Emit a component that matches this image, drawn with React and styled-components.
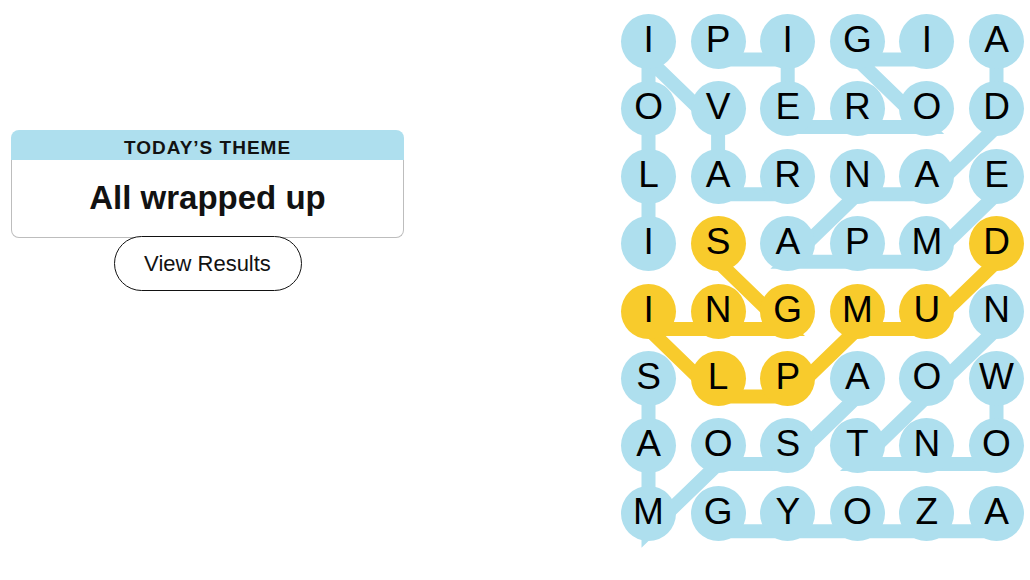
import React from "react";
import styled, { createGlobalStyle } from "styled-components";

const CELL = 55;
const COL_GAP = 14.6;
const ROW_GAP = 12.4;
const LINE_DROP = 18;
const BLUE = "#aedfee";
const YELLOW = "#f8cb2c";

const LETTERS = ["IPIGIA", "OVEROD", "LARNAE", "ISAPMD", "INGMUN", "SLPAOW", "AOSTNO", "MGYOZA"];

const WORDS = [
  { name: "RAVIOLI", cells: [[2, 2], [1, 2], [1, 1], [0, 0], [0, 1], [0, 2], [0, 3]] },
  { name: "PIEROGI", cells: [[1, 0], [2, 0], [2, 1], [3, 1], [4, 1], [3, 0], [4, 0]] },
  { name: "EMPANADA", cells: [[5, 2], [4, 3], [3, 3], [2, 3], [3, 2], [4, 2], [5, 1], [5, 0]] },
  { name: "SAMOSA", cells: [[0, 5], [0, 6], [0, 7], [1, 6], [2, 6], [3, 5]] },
  { name: "WONTON", cells: [[5, 5], [5, 6], [4, 6], [3, 6], [4, 5], [5, 4]] },
  { name: "GYOZA", cells: [[1, 7], [2, 7], [3, 7], [4, 7], [5, 7]] },
  {
    name: "DUMPLINGS",
    spangram: true,
    cells: [[5, 3], [4, 4], [3, 4], [2, 5], [1, 5], [0, 4], [1, 4], [2, 4], [1, 3]],
  },
];

const spangramCells = new Set(
  WORDS.filter((w) => w.spangram).flatMap((w) => w.cells.map(([c, r]) => `${c}-${r}`))
);

const centerX = (c) => CELL / 2 + c * (CELL + COL_GAP);
const centerY = (r) => CELL / 2 + r * (CELL + ROW_GAP) + LINE_DROP;

const GlobalStyle = createGlobalStyle`
  html, body {
    margin: 0;
    padding: 0;
    background: #ffffff;
  }
  body {
    font-family: "Liberation Sans", Arial, sans-serif;
    color: #121212;
  }
`;

const Page = styled.main`
  box-sizing: border-box;
  width: 1030px;
  height: 580px;
  display: flex;
  align-items: flex-start;
  padding: 14px 6px 0 11px;
  overflow: hidden;
`;

const ThemePanel = styled.section`
  width: 393px;
  margin-top: 116px;
  display: flex;
  flex-direction: column;
  align-items: center;
`;

const ThemeCard = styled.div`
  width: 100%;
  display: flex;
  flex-direction: column;
`;

const ThemeHeader = styled.div`
  box-sizing: border-box;
  height: 30px;
  padding-top: 5px;
  line-height: 25px;
  background: ${BLUE};
  border-radius: 8px 8px 0 0;
  text-align: center;
  font-size: 19px;
  font-weight: 700;
  letter-spacing: 1px;
  text-transform: uppercase;
  color: #121212;
`;

const ThemeBody = styled.div`
  box-sizing: border-box;
  height: 78px;
  border: 1px solid #bdbdbd;
  border-top: none;
  border-radius: 0 0 8px 8px;
  text-align: center;
`;

const ThemeTitle = styled.h1`
  margin: 0;
  font-size: 33px;
  line-height: 75px;
  font-weight: 700;
  color: #121212;
`;

const ResultsButton = styled.button`
  box-sizing: border-box;
  width: 188px;
  height: 55px;
  margin-top: -2px;
  border: 1px solid #121212;
  border-radius: 28px;
  background: #ffffff;
  font-family: "Liberation Sans", Arial, sans-serif;
  font-size: 22px;
  color: #121212;
  cursor: pointer;
`;

const Board = styled.div`
  position: relative;
  margin-left: auto;
  display: grid;
  grid-template-columns: repeat(6, ${CELL}px);
  grid-auto-rows: ${CELL}px;
  column-gap: ${COL_GAP}px;
  row-gap: ${ROW_GAP}px;
`;

const Trails = styled.svg`
  position: absolute;
  left: 0;
  top: 0;
  width: 100%;
  height: 100%;
  overflow: visible;
  z-index: 0;
  pointer-events: none;
`;

const Letter = styled.div`
  position: relative;
  z-index: 1;
  box-sizing: border-box;
  width: ${CELL}px;
  height: ${CELL}px;
  border-radius: 50%;
  background: ${(p) => (p.$spangram ? YELLOW : BLUE)};
  text-align: center;
  line-height: 51px;
  font-size: 37px;
  font-weight: 400;
  color: #000000;
  user-select: none;
`;

function WordTrails() {
  return (
    <Trails aria-hidden="true">
      {WORDS.map((w) => (
        <polyline
          key={w.name}
          points={w.cells.map(([c, r]) => `${centerX(c)},${centerY(r)}`).join(" ")}
          fill="none"
          stroke={w.spangram ? YELLOW : BLUE}
          strokeWidth="14"
          strokeLinejoin="miter"
          strokeLinecap="butt"
          strokeMiterlimit="4"
        />
      ))}
    </Trails>
  );
}

export default function App() {
  return (
    <>
      <GlobalStyle />
      <Page>
        <ThemePanel>
          <ThemeCard>
            <ThemeHeader>Today’s Theme</ThemeHeader>
            <ThemeBody>
              <ThemeTitle>All wrapped up</ThemeTitle>
            </ThemeBody>
          </ThemeCard>
          <ResultsButton type="button">View Results</ResultsButton>
        </ThemePanel>
        <Board>
          <WordTrails />
          {LETTERS.flatMap((row, r) =>
            row.split("").map((ch, c) => (
              <Letter key={`${c}-${r}`} $spangram={spangramCells.has(`${c}-${r}`)}>
                {ch}
              </Letter>
            ))
          )}
        </Board>
      </Page>
    </>
  );
}
